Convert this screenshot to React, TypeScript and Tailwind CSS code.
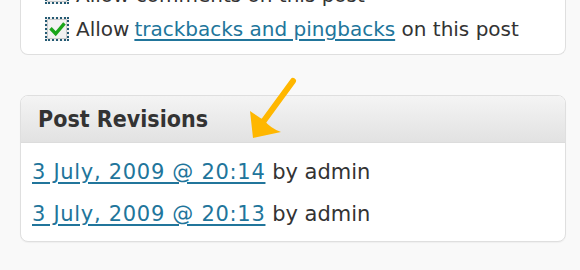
import React from "react";

const rows = [
  { when: "3 July, 2009 @ 20:14", who: "admin" },
  { when: "3 July, 2009 @ 20:13", who: "admin" },
];

function Check() {
  return (
    <span className="flex h-[24px] w-[24px] shrink-0 items-center justify-center border-2 border-dotted border-[#245a73] bg-[#f2f2f2] ring-1 ring-inset ring-[#c9c9c9]">
      <svg viewBox="0 0 16 16" className="h-[17px] w-[17px]">
        <path d="M2.5 8 L6.3 12 L13.5 3.5" fill="none" stroke="#1aa51a" strokeWidth="3.2" strokeLinecap="square" />
      </svg>
    </span>
  );
}

function Arrow() {
  return (
    <svg className="absolute left-[244px] top-[74px]" width="62" height="70" viewBox="0 0 62 70">
      <line x1="49" y1="7" x2="19" y2="48" stroke="#ffb700" strokeWidth="6" strokeLinecap="round" />
      <path d="M9 64 L6 37 Q16 44 20 46 Q26 54 37 58 Z" fill="#ffb700" />
    </svg>
  );
}

export default function App() {
  return (
    <div className="relative h-[270px] w-[580px] overflow-hidden bg-[#f9f9f9] font-['DejaVu_Sans',sans-serif] text-[#333333]">
      <div className="-mt-[20px] ml-[20px] mr-[14px] rounded-b-lg border border-t-0 border-[#dfdfdf] bg-white pb-[13px] pl-[24px] text-[20px] leading-[24px]">
        <div className="flex flex-col gap-[13px]">
          <label className="flex h-[24px] items-center gap-[7px]">
            <Check />
            <span className="mt-[5px]">Allow comments on this post</span>
          </label>
          <label className="flex h-[24px] items-center gap-[7px]">
            <Check />
            <span>
              Allow
              <a className="ml-[5px] text-[#21759b] underline underline-offset-[3px]" href="#">
                trackbacks and pingbacks
              </a>{" "}
              on this post
            </span>
          </label>
        </div>
      </div>

      <div className="ml-[20px] mr-[14px] mt-[40px] overflow-hidden rounded-lg border border-[#dfdfdf] bg-white shadow-[0_1px_1px_rgba(0,0,0,0.04)]">
        <div className="flex h-[47px] items-center border-b border-[#dcdcdc] bg-gradient-to-b from-[#f4f4f4] to-[#e2e2e2] pl-[17px]">
          <h3 className="font-['DejaVu_Sans_Condensed','DejaVu_Sans',sans-serif] text-[23px] font-bold font-stretch-condensed text-[#333333]">
            Post Revisions
          </h3>
        </div>
        <ul className="px-[11px] pb-[6px] pt-[8px] text-[21px] leading-[42px]">
          {rows.map((r) => (
            <li key={r.when}>
              <a className="tracking-[0.7px] text-[#21759b] underline underline-offset-[3px]" href="#">
                {r.when}
              </a>{" "}
              by {r.who}
            </li>
          ))}
        </ul>
      </div>

      <Arrow />
    </div>
  );
}
